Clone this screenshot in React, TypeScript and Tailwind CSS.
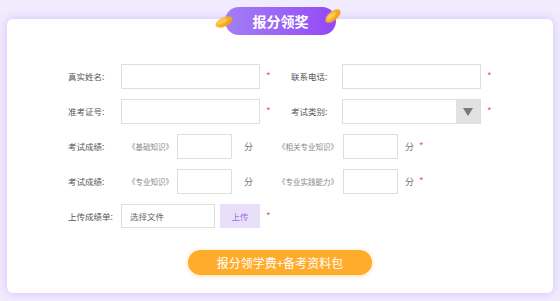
const font = { fontFamily: '"Noto Sans CJK SC", "Noto Sans", sans-serif' };

const Star = () => <span className="text-[#f05a5a] text-[10px] leading-none">*</span>;

const Coin = ({ rotate }: { rotate: number }) => (
    <svg width="22" height="14" viewBox="0 0 22 14" style={{ transform: `rotate(${rotate}deg)`, filter: "blur(0.6px)" }}>
        <defs>
            <linearGradient id={`coin${rotate}`} x1="0" y1="0" x2="1" y2="1">
                <stop offset="0" stopColor="#ffc83a" />
                <stop offset="1" stopColor="#f39210" />
            </linearGradient>
        </defs>
        <ellipse cx="11" cy="7" rx="9" ry="4.5" fill={`url(#coin${rotate})`} />
        <ellipse cx="10" cy="6" rx="5" ry="2" fill="#ffe27a" opacity="0.55" />
    </svg>
);

const Input = ({ w }: { w: string }) => (
    <div className={`${w} h-[25px] border border-[#dedede] bg-white`} />
);

export default function App() {
    return (
        <div className="w-[560px] h-[301px] bg-[#f1ebfe] pt-[19px] px-[7px] relative" style={font}>
            {/* title pill */}
            <div className="absolute left-[225px] top-[7px] w-[111px] h-[28px] rounded-[14px] bg-gradient-to-r from-[#a27ef3] to-[#9446f7] flex items-center justify-center z-10">
                <span className="text-white text-[14px] font-bold">报分领奖</span>
            </div>
            <div className="absolute left-[213px] top-[15px] z-20">
                <Coin rotate={-25} />
            </div>
            <div className="absolute left-[322px] top-[9px] z-20">
                <Coin rotate={-40} />
            </div>

            <div className="w-[546px] h-[274px] bg-white rounded-[6px] shadow-[0_0_8px_rgba(170,140,250,0.45)] pt-[45px] pl-[61px] text-[8.5px] text-[#555] whitespace-nowrap">
                <div className="flex flex-col gap-[10px]">
                    {/* row 1 */}
                    <div className="flex items-center">
                        <span className="w-[53px]">真实姓名:</span>
                        <Input w="w-[139px]" />
                        <span className="w-[31px] pl-[6px]"><Star /></span>
                        <span className="w-[51px]">联系电话:</span>
                        <Input w="w-[139px]" />
                        <span className="pl-[6px]"><Star /></span>
                    </div>
                    {/* row 2 */}
                    <div className="flex items-center">
                        <span className="w-[53px]">准考证号:</span>
                        <Input w="w-[139px]" />
                        <span className="w-[31px] pl-[6px]"><Star /></span>
                        <span className="w-[51px]">考试类别:</span>
                        <div className="w-[139px] h-[25px] border border-[#dedede] bg-white flex justify-end">
                            <div className="w-[24px] h-full bg-[#e2e2e2] flex items-center justify-center">
                                <svg width="10" height="8" viewBox="0 0 10 8"><path d="M0 0h10L5 8z" fill="#7a7a7a" /></svg>
                            </div>
                        </div>
                        <span className="pl-[6px]"><Star /></span>
                    </div>
                    {/* row 3 */}
                    <div className="flex items-center">
                        <span className="w-[53px]">考试成绩:</span>
                        <span className="w-[56px] pl-[7px] text-[7.5px] text-[#888]">《基础知识》</span>
                        <Input w="w-[55px]" />
                        <span className="w-[46px] pl-[12px] text-[9px] text-[#777]">分</span>
                        <span className="w-[65px] text-[7.5px] text-[#888]">《相关专业知识》</span>
                        <Input w="w-[55px]" />
                        <span className="pl-[7px] text-[9px] text-[#777]">分</span>
                        <span className="pl-[5px]"><Star /></span>
                    </div>
                    {/* row 4 */}
                    <div className="flex items-center">
                        <span className="w-[53px]">考试成绩:</span>
                        <span className="w-[56px] pl-[7px] text-[7.5px] text-[#888]">《专业知识》</span>
                        <Input w="w-[55px]" />
                        <span className="w-[46px] pl-[12px] text-[9px] text-[#777]">分</span>
                        <span className="w-[65px] text-[7.5px] text-[#888]">《专业实践能力》</span>
                        <Input w="w-[55px]" />
                        <span className="pl-[7px] text-[9px] text-[#777]">分</span>
                        <span className="pl-[5px]"><Star /></span>
                    </div>
                    {/* row 5 */}
                    <div className="flex items-center">
                        <span className="w-[53px]">上传成绩单:</span>
                        <div className="w-[94px] h-[24px] border border-[#dedede] bg-white flex items-center pl-[8px] text-[#666]">选择文件</div>
                        <div className="ml-[5px] w-[40px] h-[24px] bg-[#eadff8] text-[#9a6fe6] flex items-center justify-center">上传</div>
                        <span className="pl-[6px]"><Star /></span>
                    </div>
                </div>

                <div className="mt-[22px] ml-[120px] w-[184px] h-[25px] rounded-full bg-[#ffab2b] shadow-[0_1px_4px_rgba(255,170,40,0.45)] flex items-center justify-center text-white text-[12px]">
                    报分领学费+备考资料包
                </div>
            </div>
        </div>
    );
}
